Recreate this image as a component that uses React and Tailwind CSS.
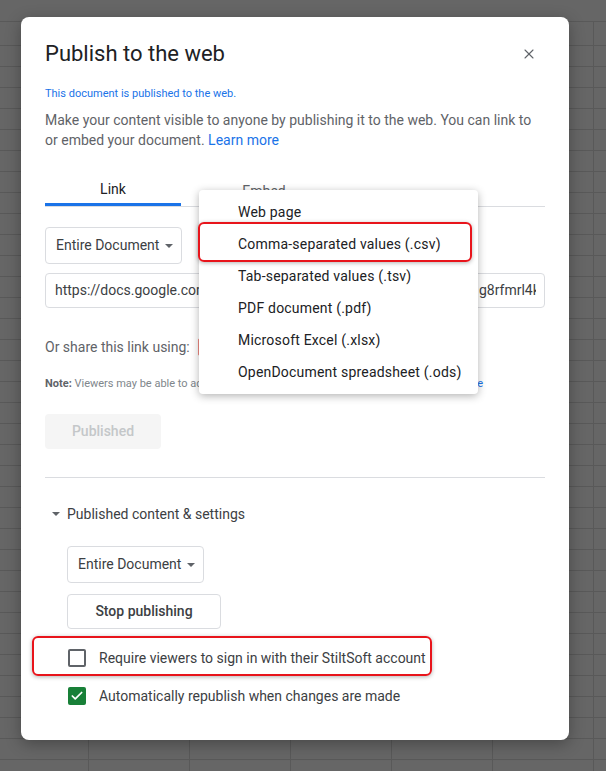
import { Check, X } from "lucide-react";

const exportFormats = [
  "Web page",
  "Comma-separated values (.csv)",
  "Tab-separated values (.tsv)",
  "PDF document (.pdf)",
  "Microsoft Excel (.xlsx)",
  "OpenDocument spreadsheet (.ods)",
];

function Caret() {
  return (
    <span className="ml-[6px] inline-block h-0 w-0 border-x-[4px] border-t-[4px] border-x-transparent border-t-[#5f6368]" />
  );
}

function SelectBox({ className = "" }) {
  return (
    <div
      className={`flex h-[37px] w-[137px] items-center rounded-[4px] border border-[#dadce0] pl-[10px] text-[14px] text-[#3c4043] ${className}`}
    >
      Entire Document
      <Caret />
    </div>
  );
}

export default function App() {
  return (
    <div className="relative flex h-[771px] w-[606px] flex-col overflow-hidden bg-[#666666] font-['Roboto','Liberation_Sans',sans-serif]">
      {/* spreadsheet behind the dialog */}
      <div className="h-[21px] shrink-0" />
      <div className="h-[25px] shrink-0 border-y border-[#595959] bg-[linear-gradient(to_right,#595959_1px,transparent_1px)] [background-size:101px_100%] [background-position:88px_0]" />
      <div className="flex-1 bg-[linear-gradient(to_right,#595959_1px,transparent_1px),linear-gradient(to_bottom,transparent_20px,#595959_20px)] [background-size:101px_100%,100%_21px] [background-position:88px_0,0_0]" />

      {/* dialog */}
      <div className="absolute left-[21px] top-[17px] h-[723px] w-[548px] rounded-[8px] bg-white px-[24px] pt-[23px] shadow-[0_4px_16px_rgba(0,0,0,0.3)]">
        <div className="flex h-[28px] items-center justify-between">
          <h1 className="text-[22px] leading-[28px] text-[#202124]">Publish to the web</h1>
          <X className="mr-[8px] h-[16px] w-[16px] text-[#5f6368]" strokeWidth={1.6} />
        </div>

        <p className="mt-[18px] text-[11px] leading-[16px] text-[#1a73e8]">
          This document is published to the web.
        </p>
        <p className="mt-[8px] text-[14px] leading-[20px] text-[#5f6368]">
          Make your content visible to anyone by publishing it to the web. You can link to or embed
          your document. <span className="text-[#1a73e8]">Learn more</span>
        </p>

        <div className="mt-[22px] flex border-b border-[#dadce0]">
          <div className="flex h-[34px] w-[136px] items-center justify-center border-b-[3px] border-[#1a73e8] pt-[4px] text-[14px] text-[#202124]">
            Link
          </div>
          <div className="flex h-[34px] w-[166px] items-center justify-center pt-[4px] text-[14px] text-[#5f6368]">
            Embed
          </div>
        </div>

        <SelectBox className="mt-[20px]" />

        <div className="mt-[9px] flex h-[35px] items-center rounded-[4px] border border-[#dadce0] pl-[9px] pr-[8px] text-[14px] text-[#3c4043]">
          <div className="flex overflow-hidden whitespace-nowrap">
            <span className="w-[424px] shrink-0 overflow-hidden">
              https://docs.google.com/spreadsheets/d/e/2PACX-1vQ
            </span>
            <span className="shrink-0">g8rfmrl4kZp/pubhtml</span>
          </div>
        </div>

        <div className="mt-[29px] flex h-[20px] items-center text-[14px] text-[#5f6368]">
          Or share this link using:
          <span className="ml-[8px] h-[18px] w-[18px] rounded-[2px] border border-[#f28b82] bg-[#db4437]" />
        </div>

        <p className="mt-[19px] whitespace-nowrap text-[11px] leading-[16px] text-[#80868b]">
          <span className="font-bold text-[#5f6368]">Note:</span> Viewers may be able to access the
          underlying data for published charts. <span className="text-[#1a73e8]">Learn more</span>
        </p>

        <div className="mt-[22px] flex h-[35px] w-[116px] items-center justify-center rounded-[4px] bg-[#f5f5f5] text-[14px] font-medium text-[#c4c7c9]">
          Published
        </div>

        <div className="mt-[28px] h-px bg-[#dadce0]" />

        <div className="mt-[26px] flex h-[20px] items-center text-[14px] text-[#3c4043]">
          <span className="ml-[7px] mr-[7px] inline-block h-0 w-0 border-x-[4px] border-t-[4px] border-x-transparent border-t-[#5f6368]" />
          Published content &amp; settings
        </div>

        <div className="ml-[22px]">
          <SelectBox className="mt-[22px]" />
          <div className="mt-[11px] flex h-[35px] w-[154px] items-center justify-center rounded-[4px] border border-[#dadce0] text-[14px] font-medium text-[#3c4043]">
            Stop publishing
          </div>

          <label className="mt-[19px] flex h-[20px] items-center text-[14px] text-[#3c4043]">
            <span className="ml-px h-[18px] w-[18px] rounded-[2px] border-2 border-[#5f6368]" />
            <span className="ml-[13px]">Require viewers to sign in with their StiltSoft account</span>
          </label>

          <label className="mt-[18px] flex h-[20px] items-center text-[14px] text-[#3c4043]">
            <span className="ml-px flex h-[18px] w-[18px] items-center justify-center rounded-[2px] bg-[#188038]">
              <Check className="h-[14px] w-[14px] text-white" strokeWidth={3} />
            </span>
            <span className="ml-[13px]">Automatically republish when changes are made</span>
          </label>
        </div>

        {/* export format menu, opened over the dialog */}
        <div className="absolute left-[178px] top-[173px] w-[279px] rounded-[4px] bg-white py-[6px] shadow-[0_2px_8px_rgba(0,0,0,0.3)]">
          {exportFormats.map((item) => (
            <div
              key={item}
              className="flex h-[32px] items-center pl-[39px] text-[14px] tracking-[0.2px] text-[#202124]"
            >
              {item}
            </div>
          ))}
        </div>

        {/* red highlight annotations */}
        <div className="pointer-events-none absolute left-[177px] top-[205px] h-[40px] w-[274px] rounded-[6px] border-2 border-[#e8141b] shadow-[0_1px_4px_rgba(0,0,0,0.3)]" />
        <div className="pointer-events-none absolute left-[11px] top-[619px] h-[40px] w-[400px] rounded-[6px] border-2 border-[#e8141b] shadow-[0_1px_4px_rgba(0,0,0,0.3)]" />
      </div>
    </div>
  );
}
